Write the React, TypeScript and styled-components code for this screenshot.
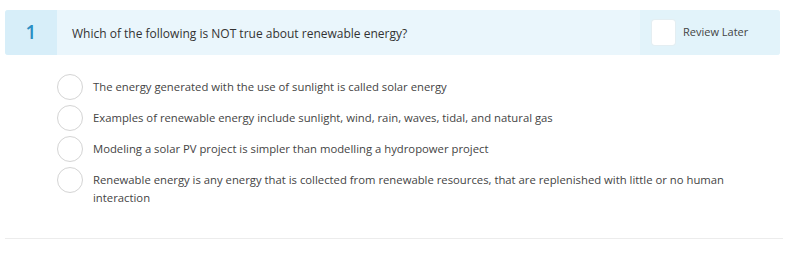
import React from "react";
import styled, { createGlobalStyle } from "styled-components";

const Global = createGlobalStyle`
  html, body { margin: 0; padding: 0; background: #ffffff; }
  body { font-family: "Open Sans", "Noto Sans", sans-serif; }
`;

const Page = styled.div`
  padding: 10px 0 0 5px;
  width: 778px;
`;

const Header = styled.div`
  display: flex;
  height: 45px;
  width: 775px;
  background: #eaf6fc;
  border-radius: 3px;
  overflow: hidden;
`;

const Number = styled.div`
  width: 52px;
  flex: none;
  display: flex;
  align-items: center;
  justify-content: center;
  background: #d7eef9;
  color: #2c8ec4;
  font-size: 19px;
  font-weight: 600;
  padding-bottom: 2px;
  box-sizing: border-box;
`;

const Question = styled.div`
  flex: 1;
  display: flex;
  align-items: center;
  padding-left: 15px;
  color: #333333;
  font-size: 12px;
  padding-top: 2px;
`;

const Review = styled.div`
  width: 140px;
  flex: none;
  background: #e2f3fa;
  display: flex;
  align-items: center;
  padding: 0 0 1px 12px;
  box-sizing: border-box;
  gap: 8px;
`;

const Box = styled.div`
  width: 23px;
  height: 25px;
  background: #ffffff;
  border-radius: 3px;
  box-shadow: 0 0 0 1px #e4eef2;
`;

const ReviewLabel = styled.span`
  font-size: 11px;
  color: #444444;
  line-height: 14px;
  padding-bottom: 1px;
`;

const Options = styled.div`
  display: flex;
  flex-direction: column;
  gap: 5px;
  padding: 19px 0 0 52px;
`;

const Row = styled.div`
  display: flex;
  align-items: flex-start;
  gap: 10px;
`;

const Radio = styled.div`
  width: 24px;
  height: 24px;
  flex: none;
  border: 1px solid #d4d4d4;
  border-radius: 50%;
  background: #ffffff;
`;

const Label = styled.div`
  font-size: 11.3px;
  color: #444444;
  line-height: 18px;
  padding-top: 4px;
  max-width: 650px;
`;

const Divider = styled.div`
  margin-top: 31px;
  height: 1px;
  width: 778px;
  background: #ececec;
`;

const options = [
  "The energy generated with the use of sunlight is called solar energy",
  "Examples of renewable energy include sunlight, wind, rain, waves, tidal, and natural gas",
  "Modeling a solar PV project is simpler than modelling a hydropower project",
  "Renewable energy is any energy that is collected from renewable resources, that are replenished with little or no human interaction",
];

export default function App() {
  return (
    <>
      <Global />
      <Page>
        <Header>
          <Number>1</Number>
          <Question>Which of the following is NOT true about renewable energy?</Question>
          <Review>
            <Box />
            <ReviewLabel>Review Later</ReviewLabel>
          </Review>
        </Header>
        <Options>
          {options.map((o) => (
            <Row key={o}>
              <Radio />
              <Label>{o}</Label>
            </Row>
          ))}
        </Options>
        <Divider />
      </Page>
    </>
  );
}
